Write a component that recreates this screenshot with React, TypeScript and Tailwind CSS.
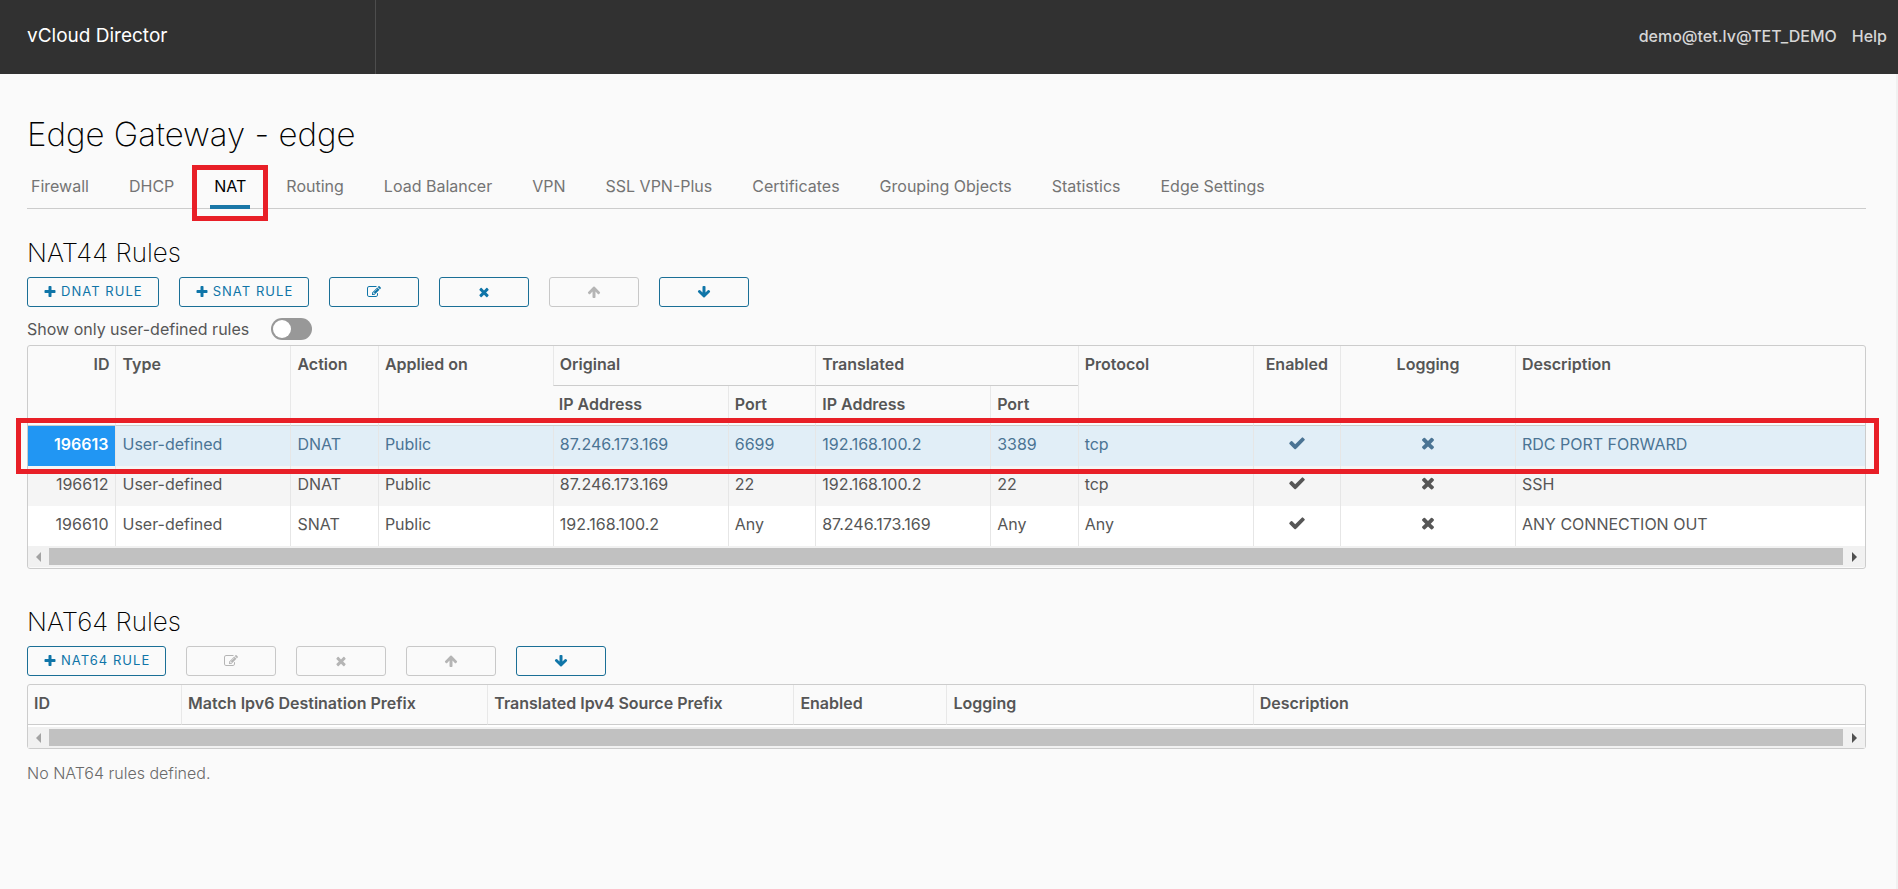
import { useState } from "react";
import type { ReactNode } from "react";

const ICONS = {
  plus: "M1600 736v192q0 40-28 68t-68 28h-416v416q0 40-28 68t-68 28h-192q-40 0-68-28t-28-68v-416h-416q-40 0-68-28t-28-68v-192q0-40 28-68t68-28h416v-416q0-40 28-68t68-28h192q40 0 68 28t28 68v416h416q40 0 68 28t28 68z",
  times:
    "M1490 1322q0 40-28 68l-136 136q-28 28-68 28t-68-28l-294-294-294 294q-28 28-68 28t-68-28l-136-136q-28-28-28-68t28-68l294-294-294-294q-28-28-28-68t28-68l136-136q28-28 68-28t68 28l294 294 294-294q28-28 68-28t68 28l136 136q28 28 28 68t-28 68l-294 294 294 294q28 28 28 68z",
  check:
    "M1671 566q0 40-28 68l-724 724-136 136q-28 28-68 28t-68-28l-136-136-362-362q-28-28-28-68t28-68l136-136q28-28 68-28t68 28l294 295 656-657q28-28 68-28t68 28l136 136q28 28 28 68z",
  up: "M1675 971q0 51-37 90l-75 75q-38 38-91 38-54 0-90-38l-294-293v704q0 52-37.500 84.500t-90.500 32.500h-128q-53 0-90.500-32.500t-37.500-84.500v-704l-294 293q-36 38-90 38t-90-38l-75-75q-38-38-38-90 0-53 38-91l651-651q35-37 90-37 54 0 91 37l651 651q37 39 37 91z",
  down: "M1675 832q0 53-37 90l-651 652q-39 37-91 37-53 0-90-37l-651-652q-38-36-38-90 0-53 38-91l74-75q39-37 91-37 53 0 90 37l294 294v-704q0-52 38-90t90-38h128q52 0 90 38t38 90v704l294-294q37-37 90-37 52 0 91 37l75 75q37 39 37 91z",
  edit: "M888 1184l116-116-152-152-116 116v56h96v96h56zm440-720q-16-16-33 1l-350 350q-17 17-1 33t33-1l350-350q17-17 1-33zm80 594v190q0 119-84.500 203.500t-203.500 84.500h-832q-119 0-203.500-84.500t-84.500-203.500v-832q0-119 84.500-203.500t203.500-84.500h832q63 0 117 25 15 7 18 23 3 17-9 29l-49 49q-14 14-32 8-23-6-45-6h-832q-66 0-113 47t-47 113v832q0 66 47 113t113 47h832q66 0 113-47t47-113v-126q0-13 9-22l64-64q15-15 35-7t20 29zm-96-738l288 288-672 672h-288v-288zm444 132l-92 92-288-288 92-92q28-28 68-28t68 28l152 152q28 28 28 68t-28 68z",
};
type IconName = keyof typeof ICONS;

function Icon({ name, className }: { name: IconName; className: string }) {
  return (
    <svg viewBox="0 0 1792 1792" className={`fill-current ${className}`} aria-hidden="true">
      <path d={ICONS[name]} />
    </svg>
  );
}

const TABS = [
  "Firewall",
  "DHCP",
  "NAT",
  "Routing",
  "Load Balancer",
  "VPN",
  "SSL VPN-Plus",
  "Certificates",
  "Grouping Objects",
  "Statistics",
  "Edge Settings",
];

function ActionButton({ icon, label, text, disabled = false }: { icon: IconName; label: string; text?: string; disabled?: boolean }) {
  return (
    <button
      type="button"
      aria-label={label}
      disabled={disabled}
      className={`flex h-[30px] items-center justify-center gap-1 rounded-[3px] border text-[13px] tracking-[0.08em] ${
        text ? "px-[15px]" : "w-[90px]"
      } ${disabled ? "border-[#c8c8c8] text-[#b5b5b5]" : "border-[#1a6f96] text-[#0f75a8]"}`}
    >
      <Icon name={icon} className="size-[14px]" />
      {text && <span>{text}</span>}
    </button>
  );
}

function ScrollBar() {
  return (
    <div className="flex h-[21px] bg-[#f1f1f1] pt-[2px] pb-[2px]" aria-hidden="true">
      <div className="flex w-[21px] items-center justify-center text-[#a3a3a3]">
        <svg viewBox="0 0 5 10" className="h-[10px] w-[5px] fill-current">
          <path d="M5 0v10L0 5z" />
        </svg>
      </div>
      <div className="flex-1 bg-[#c1c1c1]" />
      <div className="flex w-[22px] items-center justify-center text-[#505050]">
        <svg viewBox="0 0 5 10" className="h-[10px] w-[5px] fill-current">
          <path d="M0 0v10l5-5z" />
        </svg>
      </div>
    </div>
  );
}

function Th({ children, className = "", ...rest }: { children: ReactNode; className?: string; colSpan?: number; rowSpan?: number }) {
  return (
    <th
      {...rest}
      className={`h-10 border-b border-l border-b-[#ccc] border-l-[#e8e8e8] px-[6px] pt-2 align-top leading-5 font-semibold whitespace-nowrap first:border-l-0 ${className}`}
    >
      {children}
    </th>
  );
}

const RULES = [
  ["196613", "User-defined", "DNAT", "Public", "87.246.173.169", "6699", "192.168.100.2", "3389", "tcp", "RDC PORT FORWARD"],
  ["196612", "User-defined", "DNAT", "Public", "87.246.173.169", "22", "192.168.100.2", "22", "tcp", "SSH"],
  ["196610", "User-defined", "SNAT", "Public", "192.168.100.2", "Any", "87.246.173.169", "Any", "Any", "ANY CONNECTION OUT"],
];

const TD = "h-10 border-l border-l-[#e6e6e6] px-[6px] pt-2 align-top leading-5 whitespace-nowrap";

function RuleRow({ cells, index }: { cells: string[]; index: number }) {
  const selected = index === 0;
  const tone = selected ? "bg-[#e1eef7] text-[#4b7494]" : index % 2 ? "bg-[#f5f5f5]" : "bg-white";
  return (
    <tr className={`relative ${tone}`}>
      <td
        className={`h-10 px-[7px] pt-2 text-right align-top leading-5 ${selected ? "bg-[#2196f3] font-semibold text-white" : ""}`}
      >
        {cells[0]}
        {selected && <span className="pointer-events-none absolute -top-2 -right-[14px] -bottom-2 -left-3 z-10 border-[5px] border-[#e81f27]" />}
      </td>
      {cells.slice(1, 9).map((c, i) => (
        <td key={i} className={TD}>
          {c}
        </td>
      ))}
      <td className={TD}>
        <Icon name="check" className="mx-auto size-[18px]" />
      </td>
      <td className={TD}>
        <Icon name="times" className="mx-auto size-[18px]" />
      </td>
      <td className={TD}>{cells[9]}</td>
    </tr>
  );
}

export default function App() {
  const [tab, setTab] = useState("NAT");
  return (
    <div className="flex min-h-screen flex-col bg-[#fafafa] font-['Inter','Liberation_Sans',sans-serif] text-base text-[#565656]">
      <header className="flex h-[74px] bg-[#313131] pr-[11px] text-[#d6d6d6]">
        <div className="flex w-[376px] items-center border-r border-[#4d4d4d] pb-[2px] pl-[27px] text-[19px] text-white">vCloud Director</div>
        <nav className="ml-auto flex items-center gap-[15px] pb-[2px] font-medium">
          <a href="#account">demo@tet.lv@TET_DEMO</a>
          <a href="#help">Help</a>
        </nav>
      </header>

      <main className="flex-1 border-r-2 border-[#f1f1f1] pt-10 pr-[30px] pl-[27px]">
        <h1 className="text-[33px] leading-10 font-extralight text-black">Edge Gateway - edge</h1>
        <nav className="mt-[15px] flex gap-8 border-b border-[#ccc]">
          {TABS.map((t) => (
            <button
              key={t}
              type="button"
              onClick={() => setTab(t)}
              className={`relative -mb-px h-10 border-b-4 px-1 pb-[2px] whitespace-nowrap ${
                t === tab ? "border-[#1b78a8] text-black" : "border-transparent text-[#747474]"
              }`}
            >
              {t}
              {t === "NAT" && <span className="pointer-events-none absolute -inset-x-[18px] -top-1 -bottom-4 border-[5px] border-[#e81f27]" />}
            </button>
          ))}
        </nav>

        <section>
          <h2 className="mt-7 text-[26px] leading-8 font-extralight text-black">NAT44 Rules</h2>
          <div className="mt-2 flex gap-5">
            <ActionButton icon="plus" label="Add DNAT rule" text="DNAT RULE" />
            <ActionButton icon="plus" label="Add SNAT rule" text="SNAT RULE" />
            <ActionButton icon="edit" label="Edit" />
            <ActionButton icon="times" label="Delete" />
            <ActionButton icon="up" label="Move up" disabled />
            <ActionButton icon="down" label="Move down" />
          </div>
          <div className="flex h-[38px] items-center gap-[22px] pt-[6px]">
            <label htmlFor="user-only">Show only user-defined rules</label>
            <input
              id="user-only"
              type="checkbox"
              className="h-[22px] w-[41px] appearance-none rounded-full bg-[#989898] p-[2px] before:block before:size-[18px] before:rounded-full before:bg-white checked:bg-[#1b78a8] checked:before:ml-auto"
            />
          </div>
          <div className="rounded-[3px] border border-[#ccc] pb-px">
            <table className="w-full table-fixed border-separate border-spacing-0 text-left">
              <colgroup>
                <col className="w-1/21" />
                <col className="w-2/21" />
                <col className="w-1/21" />
                <col className="w-2/21" />
                <col className="w-2/21" />
                <col className="w-1/21" />
                <col className="w-2/21" />
                <col className="w-1/21" />
                <col className="w-2/21" />
                <col className="w-1/21" />
                <col className="w-2/21" />
                <col className="w-4/21" />
              </colgroup>
              <thead>
                <tr>
                  <Th rowSpan={2} className="text-right">ID</Th>
                  <Th rowSpan={2}>Type</Th>
                  <Th rowSpan={2}>Action</Th>
                  <Th rowSpan={2}>Applied on</Th>
                  <Th colSpan={2}>Original</Th>
                  <Th colSpan={2}>Translated</Th>
                  <Th rowSpan={2}>Protocol</Th>
                  <Th rowSpan={2} className="text-center">Enabled</Th>
                  <Th rowSpan={2} className="text-center">Logging</Th>
                  <Th rowSpan={2}>Description</Th>
                </tr>
                <tr>
                  <Th className="first:border-l">IP Address</Th>
                  <Th>Port</Th>
                  <Th>IP Address</Th>
                  <Th>Port</Th>
                </tr>
              </thead>
              <tbody>
                {RULES.map((r, i) => (
                  <RuleRow key={r[0]} cells={r} index={i} />
                ))}
              </tbody>
            </table>
            <ScrollBar />
          </div>
        </section>

        <section>
          <h2 className="mt-[37px] text-[26px] leading-8 font-extralight text-black">NAT64 Rules</h2>
          <div className="mt-2 flex gap-5">
            <ActionButton icon="plus" label="Add NAT64 rule" text="NAT64 RULE" />
            <ActionButton icon="edit" label="Edit" disabled />
            <ActionButton icon="times" label="Delete" disabled />
            <ActionButton icon="up" label="Move up" disabled />
            <ActionButton icon="down" label="Move down" />
          </div>
          <div className="mt-2 rounded-[3px] border border-[#ccc]">
            <table className="w-full table-fixed border-separate border-spacing-0 text-left">
              <colgroup>
                <col className="w-1/12" />
                <col className="w-2/12" />
                <col className="w-2/12" />
                <col className="w-1/12" />
                <col className="w-2/12" />
                <col className="w-4/12" />
              </colgroup>
              <thead>
                <tr>
                  <Th>ID</Th>
                  <Th>Match Ipv6 Destination Prefix</Th>
                  <Th>Translated Ipv4 Source Prefix</Th>
                  <Th>Enabled</Th>
                  <Th>Logging</Th>
                  <Th>Description</Th>
                </tr>
              </thead>
            </table>
            <div className="bg-white pt-[2px]">
              <ScrollBar />
            </div>
          </div>
          <p className="mt-3 leading-6 font-light text-[#6a6a6a]">No NAT64 rules defined.</p>
        </section>
      </main>
    </div>
  );
}
